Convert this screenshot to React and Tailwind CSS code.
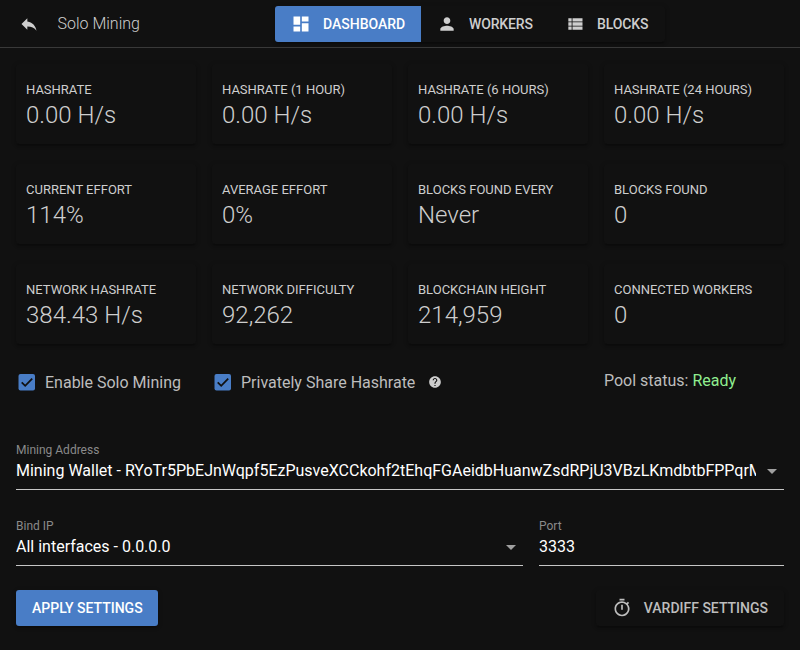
import React from "react";
import {
  MdReply,
  MdDashboard,
  MdPerson,
  MdHelp,
  MdOutlineTimer,
  MdArrowDropDown,
} from "react-icons/md";

const stats = [
  ["Hashrate", "0.00 H/s"],
  ["Hashrate (1 hour)", "0.00 H/s"],
  ["Hashrate (6 hours)", "0.00 H/s"],
  ["Hashrate (24 hours)", "0.00 H/s"],
  ["Current effort", "114%"],
  ["Average effort", "0%"],
  ["Blocks found every", "Never"],
  ["Blocks found", "0"],
  ["Network hashrate", "384.43 H/s"],
  ["Network difficulty", "92,262"],
  ["Blockchain height", "214,959"],
  ["Connected workers", "0"],
];

const raised =
  "shadow-[0_1px_5px_rgba(0,0,0,0.2),0_2px_2px_rgba(0,0,0,0.14),0_3px_1px_-2px_rgba(0,0,0,0.12)]";

function ViewListIcon({ size, className }) {
  return (
    <svg className={className} width={size} height={size} viewBox="0 0 24 24" fill="currentColor">
      <path d="M4 14h4v-4H4v4zm0 5h4v-4H4v4zM4 9h4V5H4v4zm5 5h12v-4H9v4zm0 5h12v-4H9v4zM9 5v4h12V5H9z" />
    </svg>
  );
}

function Tab({ icon: Icon, label, active, className }) {
  return (
    <button
      className={`flex h-9 items-center gap-3 pl-4 text-sm font-medium uppercase ${className} ${
        active ? "rounded-l-[3px] bg-[#497dc6] text-white" : "tracking-[-0.01em] text-[#cecece]"
      }`}
    >
      <Icon size={20} className="shrink-0" />
      <span className="whitespace-nowrap">{label}</span>
    </button>
  );
}

function Stat({ label, value }) {
  return (
    <div className={`h-20 rounded-[3px] px-2.5 pt-4 ${raised}`}>
      <div className="text-[13px] leading-5 text-[#cecece] uppercase">{label}</div>
      <div className="text-2xl leading-[30px] font-light text-[#cecece]">{value}</div>
    </div>
  );
}

function Checkbox({ label, children }) {
  return (
    <label className="flex h-6 items-center text-base whitespace-nowrap text-[#bdbdbd]">
      <svg className="mr-2 ml-[1px]" width="20" height="20" viewBox="0 0 20 20">
        <rect x="1.5" y="2" width="16.5" height="16.5" rx="2" fill="#497dc6" />
        <path d="M4.7 10.4L8.2 13.8L15.2 6.6" fill="none" stroke="#111111" strokeWidth="1.8" />
      </svg>
      <span className="pt-0.5">{label}</span>
      {children}
    </label>
  );
}

function Field({ label, value, select, className }) {
  return (
    <div className={`h-[50px] border-b border-[#c6c6c6] ${className}`}>
      <div className="h-[19px] pt-px text-xs leading-[18px] text-[#8a8a8a]">{label}</div>
      <div className="flex h-6 items-center text-base text-white">
        <span className="min-w-0 flex-1 overflow-hidden whitespace-nowrap">{value}</span>
        {select && <MdArrowDropDown size={24} className="ml-1 shrink-0 text-[#a0a0a0]" />}
      </div>
    </div>
  );
}

export default function App() {
  return (
    <div className="h-[650px] w-[800px] overflow-hidden bg-[#111111] font-['Roboto',sans-serif]">
      <header className="flex h-12 items-start border-b border-[#393939]">
        <div className="flex h-12 w-[275px] items-center pl-[19px] text-[#cecece]">
          <MdReply size={20} />
          <span className="ml-[18.5px] text-base font-light">Solo Mining</span>
        </div>
        <nav className={`mt-1.5 flex rounded-[3px] ${raised}`}>
          <Tab className="w-[146px]" icon={MdDashboard} label="Dashboard" active />
          <Tab className="w-32" icon={MdPerson} label="Workers" />
          <Tab className="w-[116px]" icon={ViewListIcon} label="Blocks" />
        </nav>
      </header>

      <main className="px-4 pt-4">
        <section className="grid grid-cols-4 gap-x-4 gap-y-5">
          {stats.map(([label, value]) => (
            <Stat key={label} label={label} value={value} />
          ))}
        </section>

        <section className="mt-[26px] flex h-6">
          <div className="w-[196px]">
            <Checkbox label="Enable Solo Mining" />
          </div>
          <div className="w-[392px]">
            <Checkbox label="Privately Share Hashrate">
              <MdHelp size={14} className="ml-[13px] text-[#cecece]" />
            </Checkbox>
          </div>
          <div className="-mt-px text-base text-[#bdbdbd]">
            Pool status: <span className="text-[#90ee90]">Ready</span>
          </div>
        </section>

        <Field
          className="mt-[46px]"
          label="Mining Address"
          value="Mining Wallet - RYoTr5PbEJnWqpf5EzPusveXCCkohf2tEhqFGAeidbHuanwZsdRPjU3VBzLKmdbtbFPPqrM"
          select
        />
        <div className="mt-[26px] flex gap-4">
          <Field className="w-[507px]" label="Bind IP" value="All interfaces - 0.0.0.0" select />
          <Field className="flex-1" label="Port" value="3333" />
        </div>

        <footer className="mt-6 flex justify-between text-sm font-medium uppercase">
          <button
            className={`h-9 w-[142px] rounded-[3px] bg-[#497dc6] pl-4 text-left whitespace-nowrap uppercase text-white ${raised}`}
          >
            Apply settings
          </button>
          <button
            className={`flex h-9 items-center gap-3 rounded-[3px] px-4 uppercase text-[#bdbdbd] ${raised}`}
          >
            <MdOutlineTimer size={20} />
            Vardiff settings
          </button>
        </footer>
      </main>
    </div>
  );
}
